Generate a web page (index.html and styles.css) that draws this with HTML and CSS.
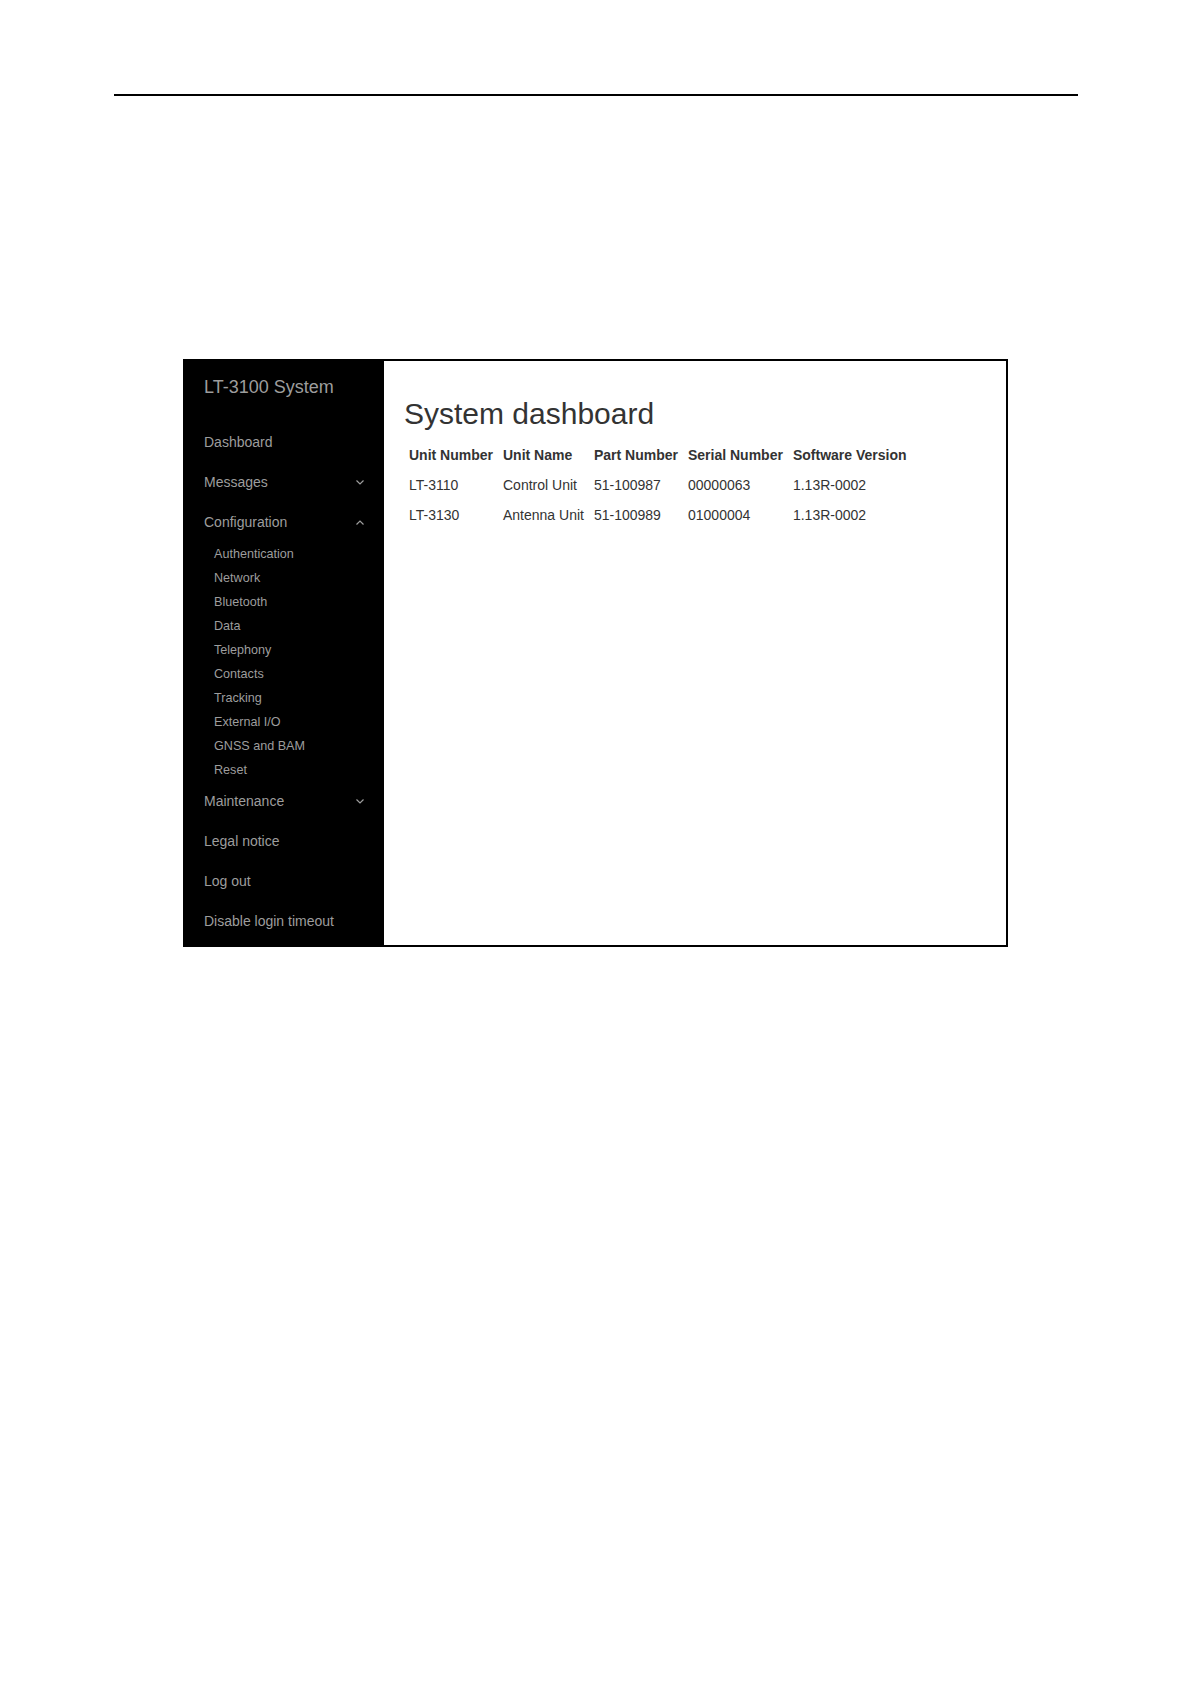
FILE: index.html
```html
<!DOCTYPE html>
<html lang="en">
<head>
<meta charset="utf-8">
<title>LT-3100 System</title>
<link rel="stylesheet" href="styles.css">
</head>
<body>
<div class="page">
  <div class="rule"></div>
  <div class="frame">
    <aside class="sidebar">
      <div class="brand">LT-3100 System</div>
      <ul class="nav">
        <li class="nav-item">Dashboard</li>
        <li class="nav-item">Messages
          <svg class="chev" width="8" height="5" viewBox="0 0 8 5"><polyline points="0.5,0.5 4,4 7.5,0.5" fill="none" stroke="#9d9d9d" stroke-width="1.2"/></svg>
        </li>
        <li class="nav-item">Configuration
          <svg class="chev" width="8" height="5" viewBox="0 0 8 5"><polyline points="0.5,4.5 4,1 7.5,4.5" fill="none" stroke="#9d9d9d" stroke-width="1.2"/></svg>
        </li>
        <li>
          <ul class="sub">
            <li>Authentication</li>
            <li>Network</li>
            <li>Bluetooth</li>
            <li>Data</li>
            <li>Telephony</li>
            <li>Contacts</li>
            <li>Tracking</li>
            <li>External I/O</li>
            <li>GNSS and BAM</li>
            <li>Reset</li>
          </ul>
        </li>
        <li class="nav-item">Maintenance
          <svg class="chev" width="8" height="5" viewBox="0 0 8 5"><polyline points="0.5,0.5 4,4 7.5,0.5" fill="none" stroke="#9d9d9d" stroke-width="1.2"/></svg>
        </li>
        <li class="nav-item">Legal notice</li>
        <li class="nav-item">Log out</li>
        <li class="nav-item">Disable login timeout</li>
      </ul>
    </aside>
    <main class="main">
      <h1 class="title">System dashboard</h1>
      <table class="units">
        <thead>
          <tr><th>Unit Number</th><th>Unit Name</th><th>Part Number</th><th>Serial Number</th><th>Software Version</th></tr>
        </thead>
        <tbody>
          <tr><td>LT-3110</td><td>Control Unit</td><td>51-100987</td><td>00000063</td><td>1.13R-0002</td></tr>
          <tr><td>LT-3130</td><td>Antenna Unit</td><td>51-100989</td><td>01000004</td><td>1.13R-0002</td></tr>
        </tbody>
      </table>
    </main>
  </div>
</div>
</body>
</html>
```

FILE: styles.css
```css
html, body {
  margin: 0;
  padding: 0;
  background: #fff;
}
body {
  font-family: "Liberation Sans", Arial, sans-serif;
  color: #333;
}
.page {
  padding-top: 94px;
}
.rule {
  width: 964px;
  height: 2px;
  background: #000;
  margin: 0 auto;
}
.frame {
  box-sizing: border-box;
  width: 825px;
  height: 588px;
  margin: 263px auto 0;
  border: 2px solid #000;
  display: flex;
}
.sidebar {
  width: 199px;
  flex: none;
  background: #000;
  color: #9d9d9d;
}
.brand {
  font-size: 18px;
  line-height: 20px;
  padding: 16px 20px 0 19px;
  height: 45px;
}
.nav {
  list-style: none;
  margin: 0;
  padding: 0;
}
.nav-item {
  display: flex;
  align-items: center;
  justify-content: space-between;
  height: 40px;
  padding: 0 20px 0 19px;
  font-size: 14px;
}
.chev {
  display: block;
}
.sub {
  list-style: none;
  margin: 0 0 -1px 0;
  padding: 0;
}
.sub li {
  height: 24px;
  line-height: 24px;
  font-size: 12.6px;
  padding-left: 29px;
}
.main {
  flex: 1;
  padding: 36px 20px 0 20px;
}
.title {
  margin: 0 0 10px 0;
  font-size: 30px;
  line-height: 33px;
  font-weight: normal;
  color: #333;
}
.units {
  border-collapse: collapse;
  font-size: 14px;
}
.units th, .units td {
  padding: 5px;
  line-height: 20px;
  text-align: left;
  white-space: nowrap;
}
.units th {
  font-weight: bold;
}
```
